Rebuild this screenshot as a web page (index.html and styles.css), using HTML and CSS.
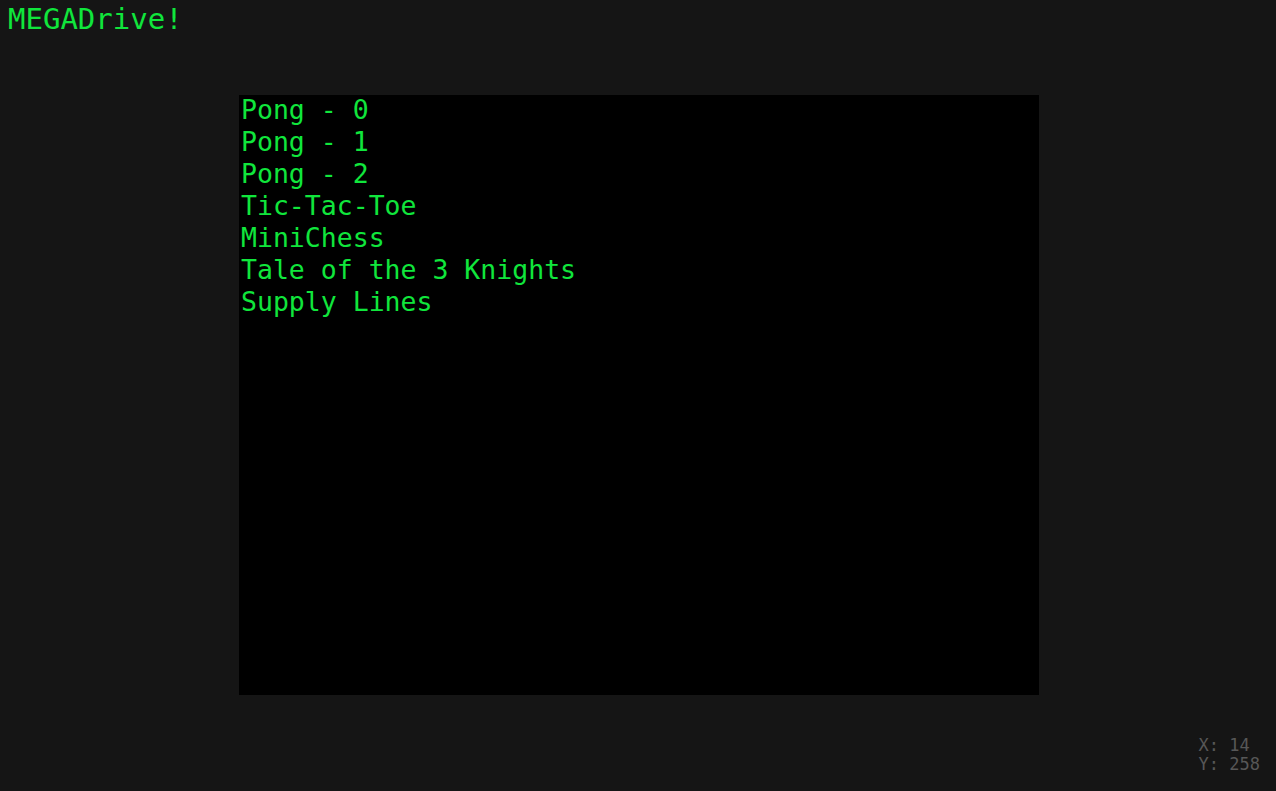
FILE: index.html
```html
<!DOCTYPE html>
<html lang="en">
<head>
<meta charset="utf-8">
<title>MEGADrive!</title>
<link rel="stylesheet" href="styles.css">
</head>
<body>
<div class="app">
  <header class="top">
    <h1 class="title">MEGADrive!</h1>
  </header>
  <main class="screen">
    <ul class="menu">
      <li>Pong - 0</li>
      <li>Pong - 1</li>
      <li>Pong - 2</li>
      <li>Tic-Tac-Toe</li>
      <li>MiniChess</li>
      <li>Tale of the 3 Knights</li>
      <li>Supply Lines</li>
    </ul>
  </main>
  <footer class="bottom">
    <div class="coords">
      <div>X: 14</div>
      <div>Y: 258</div>
    </div>
  </footer>
</div>
</body>
</html>
```
FILE: styles.css
```css
html, body {
  margin: 0;
  padding: 0;
  background: #151515;
  height: 100%;
  overflow: hidden;
}
.app {
  display: grid;
  grid-template-rows: 95px 600px 1fr;
  grid-template-columns: 239px 800px 1fr;
  height: 100vh;
  font-family: "DejaVu Sans Mono", "Liberation Mono", monospace;
}
.top {
  grid-row: 1;
  grid-column: 1 / 4;
}
.title {
  margin: 0;
  padding: 3px 0 0 8px;
  font-size: 29px;
  line-height: 32px;
  font-weight: normal;
  color: #10e63c;
}
.screen {
  grid-row: 2;
  grid-column: 2;
  background: #000;
}
.menu {
  list-style: none;
  margin: 0;
  padding: 0 0 0 2px;
  font-size: 26.5px;
  line-height: 32px;
  color: #10e63c;
}
.menu li {
  margin-top: -1px;
  margin-bottom: 1px;
}
.bottom {
  grid-row: 3;
  grid-column: 1 / 4;
  display: flex;
  justify-content: flex-end;
  align-items: flex-end;
  padding: 0 16px 17px 0;
}
.coords {
  color: #575757;
  font-size: 17px;
  line-height: 19px;
}
```
